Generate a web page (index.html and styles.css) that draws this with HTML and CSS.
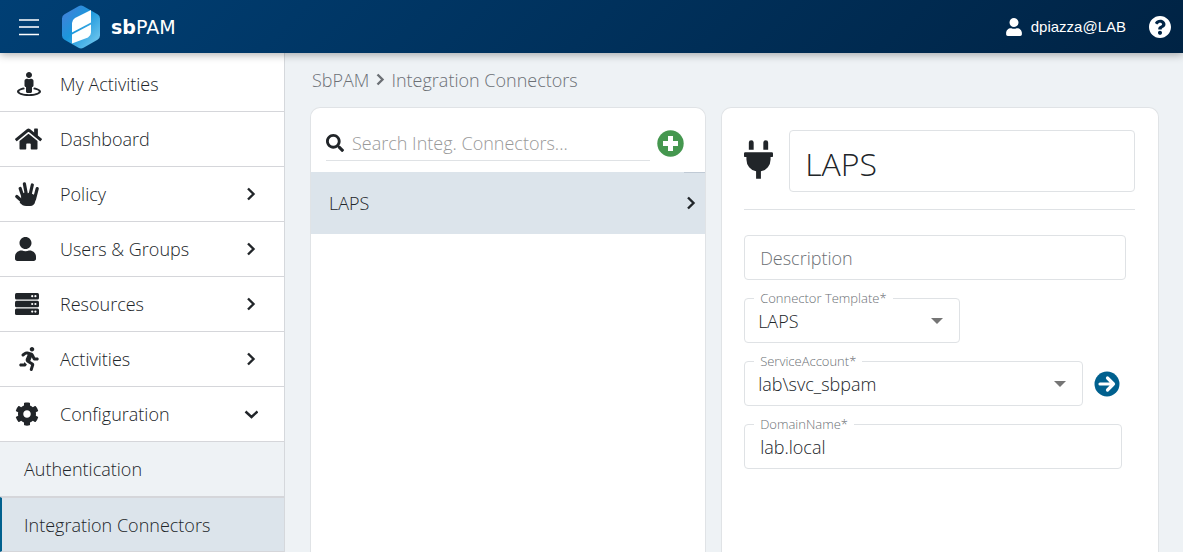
FILE: index.html
```html
<!DOCTYPE html>
<html lang="en">
<head>
    <meta charset="UTF-8">
    <meta name="viewport" content="width=device-width, initial-scale=1.0">
    <title>sbPAM - Integration Connectors</title>
    <link rel="stylesheet" href="styles.css">
</head>
<body>

    <header class="topbar">
        <button type="button" class="icon-button menu-button" aria-label="Menu">
            <svg width="20" height="18" viewBox="0 0 20 18"><path d="M0 2h20M0 16.500h20" stroke="#fff" stroke-width="1.700"/><path d="M0 9h20" stroke="#c4d2e0" stroke-width="2"/></svg>
        </button>
        <a href="#" class="brand">
            <svg width="40" height="44" viewBox="0 0 40 44">
                <defs>
                    <linearGradient id="logoFill" x1="0" y1="0" x2="1" y2="1">
                        <stop offset="0" stop-color="#4a7bd8"/>
                        <stop offset=".45" stop-color="#1b97dc"/>
                        <stop offset="1" stop-color="#80d0f2"/>
                    </linearGradient>
                </defs>
                <path d="M17.500 1.200a5 5 0 0 1 5 0l14 8a5 5 0 0 1 2.500 4.300v17a5 5 0 0 1-2.500 4.300l-14 8a5 5 0 0 1-5 0l-14-8A5 5 0 0 1 1 30.500v-17a5 5 0 0 1 2.500-4.300z" fill="url(#logoFill)"/>
                <path d="M30 5v12.500L11 27.500V18q0-3 3-5zM11 38.500V29.500l19-10v8q0 3-3 5z" fill="#fff"/>
            </svg>
            <span class="brand-name"><b>sb</b>PAM</span>
        </a>
        <a href="#" class="account">
            <svg width="16" height="18" viewBox="0 0 448 512"><path fill="currentColor" d="M224 256c70.700 0 128-57.300 128-128S294.700 0 224 0 96 57.300 96 128s57.300 128 128 128zm89.600 32h-16.700c-22.200 10.200-46.900 16-72.900 16s-50.600-5.800-72.900-16h-16.700C60.200 288 0 348.200 0 422.400V464c0 26.500 21.500 48 48 48h352c26.500 0 48-21.500 48-48v-41.600c0-74.200-60.200-134.400-134.400-134.400z"/></svg>
            dpiazza@LAB
        </a>
        <button type="button" class="icon-button" aria-label="Help">
            <svg width="22" height="22" viewBox="8 8 496 496"><path fill="#fff" d="M504 256c0 136.997-111.043 248-248 248S8 392.997 8 256C8 119.083 119.043 8 256 8s248 111.083 248 248zM262.655 90c-54.497 0-89.255 22.957-116.549 63.758-3.536 5.286-2.353 12.415 2.715 16.258l34.699 26.310c5.205 3.947 12.621 3.008 16.665-2.122 17.864-22.658 30.113-35.797 57.303-35.797 20.429 0 45.698 13.148 45.698 32.958 0 14.976-12.363 22.667-32.534 33.976C247.128 238.528 216 254.941 216 296v4c0 6.627 5.373 12 12 12h56c6.627 0 12-5.373 12-12v-1.333c0-28.462 83.186-29.647 83.186-106.667 0-58.002-60.165-102-116.531-102zM256 338c-25.365 0-46 20.635-46 46 0 25.364 20.635 46 46 46s46-20.636 46-46c0-25.365-20.635-46-46-46z"/></svg>
        </button>
    </header>

    <div class="layout">
        <nav class="sidebar">
            <a href="#" class="nav-item">
                <span class="nav-icon centered"><svg width="24" height="24" viewBox="0 0 512 512"><path fill="currentColor" d="M367.900 329.760c-4.620 5.300-9.780 10.100-15.900 13.650v22.940c66.520 9.340 112 28.050 112 49.650 0 30.930-93.120 56-208 56S48 446.930 48 416c0-21.600 45.480-40.300 112-49.650v-22.940c-6.120-3.550-11.280-8.350-15.900-13.650C58.870 345.340 0 378.050 0 416c0 53.020 114.620 96 256 96s256-42.980 256-96c0-37.950-58.870-70.660-144.100-86.240zM256 128c35.350 0 64-28.650 64-64S291.350 0 256 0s-64 28.650-64 64 28.650 64 64 64zm-64 192v96c0 17.670 14.330 32 32 32h64c17.670 0 32-14.330 32-32v-96c17.670 0 32-14.330 32-32v-96c0-26.510-21.490-48-48-48h-11.800c-11.070 5.030-23.260 8-36.200 8s-25.130-2.970-36.200-8H208c-26.510 0-48 21.490-48 48v96c0 17.670 14.330 32 32 32z"/></svg></span>
                <span class="nav-label">My Activities</span>
            </a>
            <a href="#" class="nav-item">
                <span class="nav-icon"><svg width="27" height="24" viewBox="0 0 576 512"><path fill="currentColor" d="M280.370 148.260L96 300.110V464a16 16 0 0 0 16 16l112.060-.29a16 16 0 0 0 15.920-16V368a16 16 0 0 1 16-16h64a16 16 0 0 1 16 16v95.640a16 16 0 0 0 16 16.050L464 480a16 16 0 0 0 16-16V300L295.670 148.260a12.190 12.190 0 0 0-15.300 0zM571.600 251.470L488 182.560V44.050a12 12 0 0 0-12-12h-56a12 12 0 0 0-12 12v72.610L318.470 43a48 48 0 0 0-61 0L4.340 251.470a12 12 0 0 0-1.600 16.900l25.500 31A12 12 0 0 0 45.150 301l235.220-193.740a12.190 12.190 0 0 1 15.300 0L530.900 301a12 12 0 0 0 16.900-1.600l25.500-31a12 12 0 0 0-1.700-16.930z"/></svg></span>
                <span class="nav-label">Dashboard</span>
            </a>
            <a href="#" class="nav-item">
                <span class="nav-icon"><svg width="24" height="24" viewBox="0 0 24 24"><g fill="none" stroke="currentColor" stroke-width="3.200" stroke-linecap="round"><path d="M5.200 6.500L8 15M9.400 1.900L11.500 13M17.300 3L15 13M22.200 6.600L19.500 17M1.800 14.500L8.500 20.500"/></g><path fill="currentColor" d="M6.500 12l3-1.500 3 1 2-1 4 2 2.500 2-.8 5c-.5 2.800-2.300 4.500-5 4.500h-4c-2.700 0-4.500-1.300-6.500-3.300L6 17.500z"/></svg></span>
                <span class="nav-label">Policy</span>
                <svg class="chevron" width="14" height="14" viewBox="0 0 14 14"><path d="M4 1.500L9.500 7 4 12.500"/></svg>
            </a>
            <a href="#" class="nav-item">
                <span class="nav-icon"><svg width="21" height="24" viewBox="0 0 448 512"><path fill="currentColor" d="M224 256c70.700 0 128-57.300 128-128S294.700 0 224 0 96 57.300 96 128s57.300 128 128 128zm89.600 32h-16.700c-22.200 10.200-46.900 16-72.900 16s-50.600-5.800-72.900-16h-16.700C60.200 288 0 348.200 0 422.400V464c0 26.500 21.500 48 48 48h352c26.500 0 48-21.500 48-48v-41.600c0-74.200-60.200-134.400-134.400-134.400z"/></svg></span>
                <span class="nav-label">Users &amp; Groups</span>
                <svg class="chevron" width="14" height="14" viewBox="0 0 14 14"><path d="M4 1.500L9.500 7 4 12.500"/></svg>
            </a>
            <a href="#" class="nav-item">
                <span class="nav-icon"><svg width="24" height="24" viewBox="0 0 24 24"><g fill="currentColor"><rect y="1" width="24" height="6.500" rx="1.500"/><rect y="8.700" width="24" height="6.500" rx="1.500"/><rect y="16.400" width="24" height="6.500" rx="1.500"/></g><g fill="#fff"><circle cx="17.200" cy="4.200" r="1.100"/><circle cx="20.400" cy="4.200" r="1.100"/><circle cx="17.200" cy="12" r="1.100"/><circle cx="20.400" cy="12" r="1.100"/><circle cx="17.200" cy="19.600" r="1.100"/><circle cx="20.400" cy="19.600" r="1.100"/></g></svg></span>
                <span class="nav-label">Resources</span>
                <svg class="chevron" width="14" height="14" viewBox="0 0 14 14"><path d="M4 1.500L9.500 7 4 12.500"/></svg>
            </a>
            <a href="#" class="nav-item">
                <span class="nav-icon centered"><svg width="20" height="24" viewBox="0 0 416 512"><path fill="currentColor" d="M272 96c26.510 0 48-21.490 48-48S298.510 0 272 0s-48 21.490-48 48 21.490 48 48 48zM113.690 317.470l-14.800 34.520H32c-17.670 0-32 14.330-32 32s14.330 32 32 32h77.450c19.250 0 36.580-11.440 44.110-29.090l8.790-20.520-10.670-6.300c-17.320-10.230-30.060-25.370-37.990-42.610zM384 223.990h-44.030l-26.060-53.250c-12.500-25.550-35.450-44.230-61.780-50.940l-71.080-21.140c-28.300-6.800-57.770-.55-80.840 17.140l-39.670 30.410c-14.030 10.750-16.690 30.830-5.920 44.860s30.840 16.660 44.860 5.920l39.690-30.410c7.670-5.890 17.440-8 25.270-6.140l14.700 4.370-37.460 87.390c-12.620 29.480-1.310 64.010 26.300 80.310l84.980 50.170-27.470 87.730c-5.280 16.860 4.110 34.820 20.970 40.090 3.190 1 6.410 1.480 9.580 1.480 13.610 0 26.230-8.770 30.520-22.450l31.640-101.060c5.910-20.770-2.890-43.080-21.640-54.390l-61.240-36.140 31.310-78.280 20.270 41.430c8 16.340 24.920 26.890 43.110 26.890H384c17.670 0 32-14.330 32-32s-14.330-31.990-32-31.990z"/></svg></span>
                <span class="nav-label">Activities</span>
                <svg class="chevron" width="14" height="14" viewBox="0 0 14 14"><path d="M4 1.500L9.500 7 4 12.500"/></svg>
            </a>
            <a href="#" class="nav-item">
                <span class="nav-icon"><svg width="24" height="24" viewBox="0 0 512 512"><path fill="currentColor" d="M487.400 315.700l-42.600-24.600c4.300-23.200 4.300-47 0-70.200l42.600-24.600c4.900-2.800 7.100-8.600 5.500-14-11.100-35.600-30-67.800-54.700-94.600-3.800-4.100-10-5.100-14.800-2.300L380.800 110c-17.900-15.400-38.500-27.300-60.800-35.100V25.800c0-5.600-3.900-10.500-9.400-11.700-36.700-8.200-74.300-7.800-109.200 0-5.500 1.200-9.400 6.100-9.400 11.700V75c-22.200 7.900-42.800 19.800-60.800 35.100L88.700 85.500c-4.900-2.800-11-1.900-14.800 2.300-24.700 26.700-43.600 58.900-54.700 94.600-1.700 5.400.6 11.200 5.500 14L67.300 221c-4.300 23.200-4.300 47 0 70.200l-42.600 24.600c-4.900 2.800-7.100 8.600-5.500 14 11.100 35.600 30 67.800 54.700 94.600 3.800 4.100 10 5.100 14.800 2.300l42.600-24.600c17.900 15.400 38.500 27.300 60.800 35.100v49.200c0 5.600 3.900 10.500 9.400 11.700 36.700 8.200 74.300 7.800 109.200 0 5.500-1.200 9.400-6.100 9.400-11.700v-49.200c22.200-7.900 42.800-19.800 60.800-35.100l42.600 24.600c4.900 2.800 11 1.900 14.800-2.300 24.700-26.700 43.600-58.900 54.700-94.600 1.500-5.500-.7-11.300-5.600-14.100zM256 336c-44.100 0-80-35.900-80-80s35.900-80 80-80 80 35.900 80 80-35.900 80-80 80z"/></svg></span>
                <span class="nav-label">Configuration</span>
                <svg class="chevron" width="14" height="14" viewBox="0 0 14 14"><path d="M1.500 4.500L7.500 10l6-5.500"/></svg>
            </a>
            <a href="#" class="nav-item sub-item">Authentication</a>
            <a href="#" class="nav-item sub-item active">Integration Connectors</a>
        </nav>

        <main class="content">
            <div class="breadcrumb">
                <a href="#">SbPAM</a>
                <svg class="chevron" width="10" height="14" viewBox="1 0 10 14"><path d="M3.500 1.500L8.500 6.500l-5 5"/></svg>
                <a href="#">Integration Connectors</a>
            </div>

            <div class="panels">
                <!-- Connector list -->
                <section class="panel">
                    <div class="list-header">
                        <label class="search">
                            <svg width="18" height="18" viewBox="0 0 512 512"><path fill="currentColor" d="M505 442.700L405.300 343c-4.500-4.500-10.600-7-17-7H372c27.600-35.300 44-79.700 44-128C416 93.100 322.900 0 208 0S0 93.100 0 208s93.100 208 208 208c48.300 0 92.700-16.400 128-44v16.300c0 6.400 2.500 12.500 7 17l99.700 99.700c9.400 9.400 24.600 9.400 33.900 0l28.300-28.300c9.400-9.400 9.400-24.600.1-34zM208 336c-70.700 0-128-57.200-128-128 0-70.700 57.200-128 128-128 70.700 0 128 57.200 128 128 0 70.700-57.200 128-128 128z"/></svg>
                            <input type="text" class="search-input" placeholder="Search Integ. Connectors..." aria-label="Search Integ. Connectors">
                        </label>
                        <button type="button" class="icon-button" aria-label="Add connector">
                            <svg width="27" height="27" viewBox="0 0 27 27"><circle cx="13.500" cy="13.500" r="13.200" fill="#45974f"/><path d="M13.500 6v15M6 13.500h15" stroke="#fff" stroke-width="5"/></svg>
                        </button>
                    </div>
                    <a href="#" class="list-item">
                        LAPS
                        <svg class="chevron" width="14" height="14" viewBox="0 0 14 14"><path d="M4 1.500L9.500 7 4 12.500"/></svg>
                    </a>
                </section>

                <!-- Connector details -->
                <section class="panel">
                    <form class="details">
                        <div class="title-row">
                            <svg class="title-icon" width="29" height="39" viewBox="0 0 384 512"><path fill="currentColor" d="M320 32a32 32 0 0 0-64 0v96h64zm48 128H16a16 16 0 0 0-16 16v32a16 16 0 0 0 16 16h16v32a160.070 160.070 0 0 0 128 156.800V512h64v-99.200A160.070 160.070 0 0 0 352 256v-32h16a16 16 0 0 0 16-16v-32a16 16 0 0 0-16-16zM128 32a32 32 0 0 0-64 0v96h64z"/></svg>
                            <input type="text" class="title-input" value="LAPS" aria-label="Name">
                        </div>

                        <div class="field field-description">
                            <input type="text" id="description" class="form-input" placeholder="Description" aria-label="Description">
                        </div>

                        <div class="field field-template">
                            <label for="template" class="field-label">Connector Template*</label>
                            <select id="template" class="form-input form-select">
                                <option>LAPS</option>
                            </select>
                            <svg class="caret" width="12" height="6" viewBox="0 0 12 6"><path d="M0 0h12L6 6z"/></svg>
                        </div>

                        <div class="field-row">
                            <div class="field field-account">
                                <label for="account" class="field-label">ServiceAccount*</label>
                                <select id="account" class="form-input form-select">
                                    <option>lab\svc_sbpam</option>
                                </select>
                                <svg class="caret" width="12" height="6" viewBox="0 0 12 6"><path d="M0 0h12L6 6z"/></svg>
                            </div>
                            <button type="button" class="icon-button" aria-label="Open service account">
                                <svg width="26" height="26" viewBox="0 0 26 26"><circle cx="13" cy="13" r="12.500" fill="#00608e"/><path d="M6 13h13.500M13.500 7L19.500 13l-6 6" fill="none" stroke="#fff" stroke-width="3.200" stroke-linecap="round" stroke-linejoin="round"/></svg>
                            </button>
                        </div>

                        <div class="field field-domain">
                            <label for="domain" class="field-label">DomainName*</label>
                            <input type="text" id="domain" class="form-input" value="lab.local">
                        </div>
                    </form>
                </section>
            </div>
        </main>
    </div>

</body>
</html>
```
FILE: styles.css
```css
* {
    box-sizing: border-box;
}

body {
    margin: 0;
    height: 100vh;
    display: flex;
    flex-direction: column;
    overflow: hidden;
    font-family: "Open Sans", "Noto Sans", sans-serif;
    font-size: 18px;
    font-weight: 300;
    line-height: 24px;
    color: #212529;
    background-color: #eef2f5;
}

a {
    color: inherit;
    text-decoration: none;
}

svg {
    display: block;
    flex-shrink: 0;
}

input,
select {
    font: inherit;
    color: inherit;
    min-width: 0;
}

.icon-button {
    padding: 0;
    border: none;
    background: none;
    cursor: pointer;
}

.chevron {
    fill: none;
    stroke: currentColor;
    stroke-width: 2.4px;
}

/* Top bar */
.topbar {
    position: relative;
    z-index: 1;
    flex-shrink: 0;
    display: flex;
    align-items: center;
    height: 53px;
    padding: 0 12px 0 19px;
    color: #fff;
    background: linear-gradient(135deg, #003f74, #002344);
    box-shadow: 0 2px 8px rgba(0, 0, 0, 0.3);
}

.menu-button {
    margin-right: 22px;
}

.brand {
    display: flex;
    align-items: center;
    gap: 10px;
}

.brand-name {
    font-family: "DejaVu Sans", sans-serif;
    font-size: 19px;
    font-weight: 400;
}

.account {
    display: flex;
    align-items: center;
    gap: 9px;
    margin-left: auto;
    margin-right: 23px;
    font-family: "Liberation Sans", Arial, sans-serif;
    font-size: 15px;
    font-weight: 400;
}

/* Sidebar */
.layout {
    flex: 1;
    display: flex;
    min-height: 0;
}

.sidebar {
    flex: 0 0 285px;
    padding-top: 4px;
    overflow: hidden;
    background-color: #fff;
    border-right: 1px solid #d5d8dc;
}

.nav-item {
    display: flex;
    align-items: center;
    height: 55px;
    padding: 0 26px 0 15px;
    border-bottom: 1px solid #d5d6da;
}

.nav-icon {
    display: flex;
    width: 27px;
    margin-right: 18px;
}

.nav-icon.centered {
    justify-content: center;
}

.nav-label {
    flex: 1;
}

.sub-item {
    padding-left: 24px;
    background-color: #eef2f5;
}

.sub-item.active {
    padding-left: 22px;
    border-top: 1px solid #d5d6da;
    border-left: 2px solid #00608e;
    background-color: #dce4eb;
}

/* Content */
.content {
    flex: 1;
    display: flex;
    flex-direction: column;
    min-width: 0;
    padding: 15px 24px 0 25px;
}

.breadcrumb {
    display: flex;
    align-items: center;
    gap: 6px;
    padding-left: 2px;
    margin-bottom: 15px;
    color: #6c7075;
}

.panels {
    flex: 1;
    display: grid;
    grid-template-columns: 19fr 21fr;
    gap: 15px;
}

.panel {
    min-width: 0;
    border: 1px solid #e0e3e6;
    border-bottom: none;
    border-radius: 10px 10px 0 0;
    background-color: #fff;
}

.list-header {
    position: relative;
    display: flex;
    align-items: center;
    gap: 7px;
    height: 64px;
    padding: 6px 21px 0 15px;
}

/* short rule under the add button */
.list-header::after {
    content: "";
    position: absolute;
    right: 0;
    bottom: -1px;
    width: 21px;
    height: 1px;
    background-color: #c0cad5;
}

.search {
    flex: 1;
    display: flex;
    align-items: center;
    gap: 8px;
    min-width: 0;
    border-bottom: 1px solid #dfe2e5;
}

.search-input {
    flex: 1;
    height: 34px;
    padding: 0;
    border: none;
    outline: none;
    background: none;
}

.search-input::placeholder {
    color: #999;
}

.list-item {
    display: flex;
    align-items: center;
    justify-content: space-between;
    height: 62px;
    padding: 0 7px 0 18px;
    background-color: #dce4eb;
}

/* Details form */
.details {
    padding: 22px 23px 22px 22px;
}

.title-row {
    display: flex;
    align-items: center;
    gap: 16px;
    padding-bottom: 17px;
    margin-bottom: 25px;
    border-bottom: 1px solid #dfe2e5;
}

.title-icon {
    margin-bottom: 4px;
}

.title-input {
    flex: 1;
    height: 62px;
    padding: 4px 15px 0;
    border: 1px solid #dfe2e5;
    border-radius: 4px;
    font-size: 32px;
}

.field {
    position: relative;
    margin-bottom: 18px;
}

.field-description {
    margin-right: 9px;
}

.field-template {
    width: 56%;
    max-width: 216px;
}

.field-row {
    display: flex;
    align-items: center;
    gap: 11px;
    margin-right: 15px;
    margin-bottom: 18px;
}

.field-account {
    flex: 1;
    margin-bottom: 0;
}

.field-domain {
    margin-right: 13px;
}

.form-input {
    display: block;
    width: 100%;
    height: 45px;
    padding: 0 15px;
    border: 1px solid #dfe2e5;
    border-radius: 4px;
    background-color: #fff;
}

.form-input::placeholder {
    color: #6c7075;
}

.form-select {
    appearance: none;
    padding: 0 32px 0 13px;
}

.field-label {
    position: absolute;
    top: -8px;
    left: 10px;
    padding: 0 6px;
    font-size: 13px;
    line-height: 16px;
    color: #6c7075;
    background-color: #fff;
}

.caret {
    position: absolute;
    top: 20px;
    right: 17px;
    fill: #757575;
    pointer-events: none;
}
```
